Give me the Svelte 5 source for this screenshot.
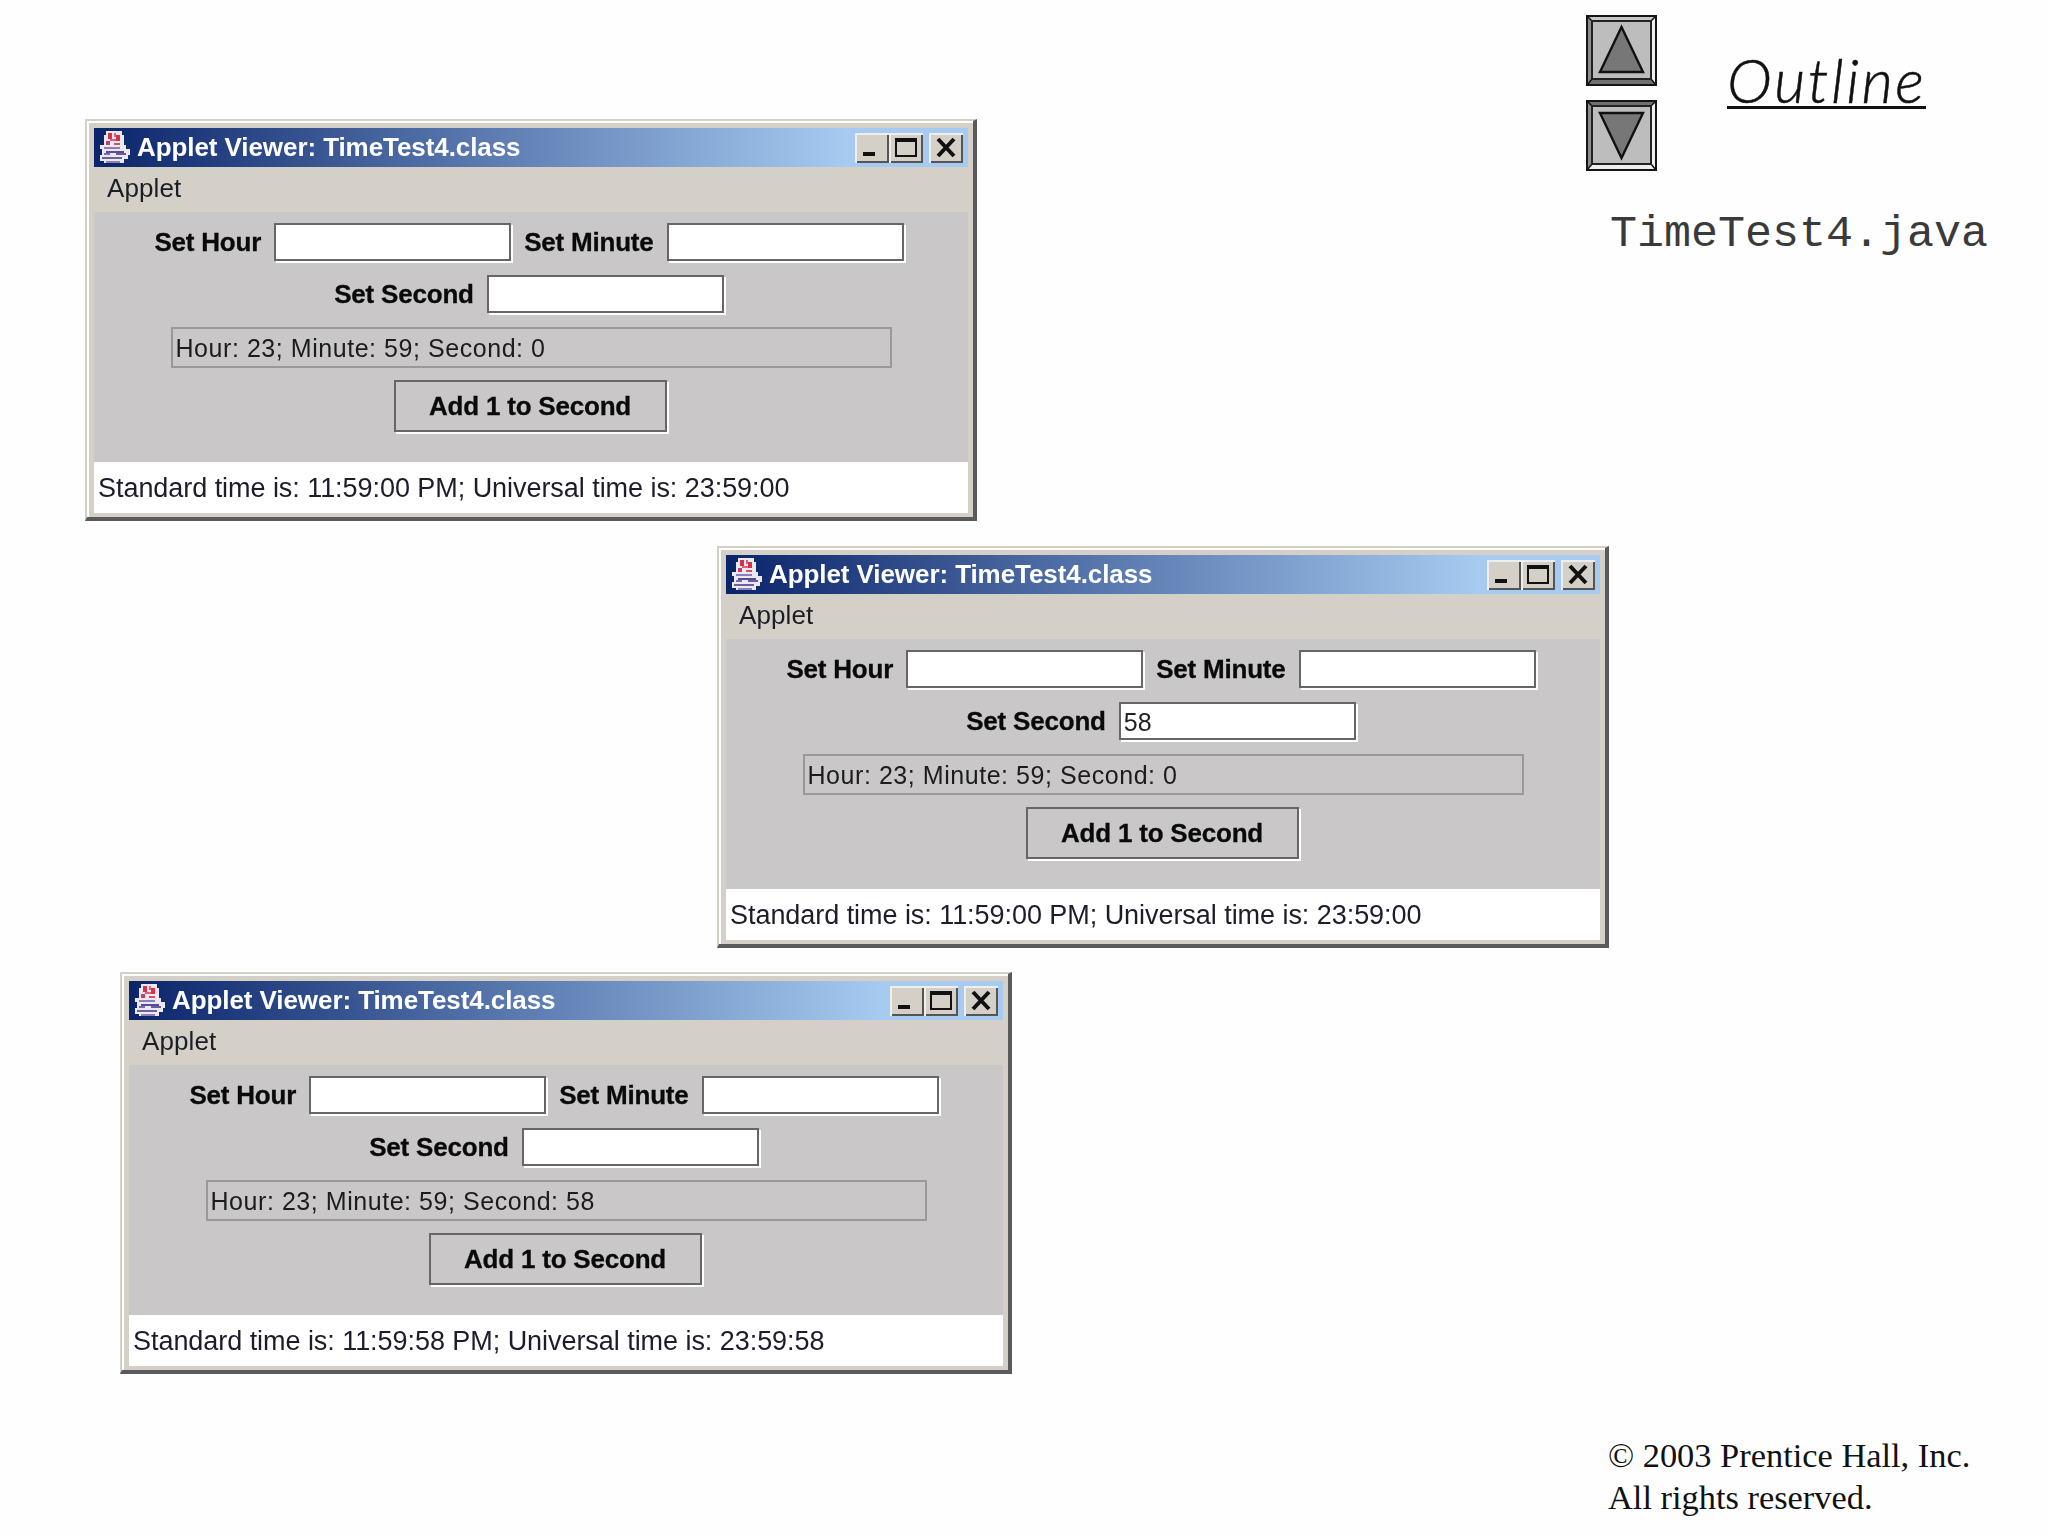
<script>
  const windows = [
    { x: 85, y: 119, second: '', hour: 'Hour: 23; Minute: 59; Second: 0', time: 'Standard time is: 11:59:00 PM; Universal time is: 23:59:00' },
    { x: 717, y: 546, second: '58', hour: 'Hour: 23; Minute: 59; Second: 0', time: 'Standard time is: 11:59:00 PM; Universal time is: 23:59:00' },
    { x: 120, y: 972, second: '', hour: 'Hour: 23; Minute: 59; Second: 58', time: 'Standard time is: 11:59:58 PM; Universal time is: 23:59:58' }
  ];
</script>

<div class="stage">
  <aside class="side">
    <div class="top">
      <div class="arrows">
        <svg width="71" height="71" viewBox="0 0 71 71">
          <rect x="1" y="1" width="69" height="69" fill="#bdbdbd"/>
          <path d="M1 1H70L65 6H6Z" fill="#c8c8c8"/>
          <path d="M1 1L6 6V64L1 70Z" fill="#8e8e8e"/>
          <path d="M70 1V70L65 64V6Z" fill="#f0f0f0"/>
          <path d="M1 70H70L65 64H6Z" fill="#707070"/>
          <path d="M1 1L6 6M70 1L65 6M1 70L6 64M70 70L65 64" stroke="#111" stroke-width="1.5"/>
          <rect x="1" y="1" width="69" height="69" fill="none" stroke="#151515" stroke-width="2"/>
          <rect x="6" y="6" width="59" height="58" fill="none" stroke="#222" stroke-width="2"/>
          <path d="M35.5 12L57 57H14Z" fill="#777" stroke="#111" stroke-width="2.4"/>
        </svg>
        <svg width="71" height="71" viewBox="0 0 71 71">
          <rect x="1" y="1" width="69" height="69" fill="#bdbdbd"/>
          <path d="M1 1H70L65 6H6Z" fill="#707070"/>
          <path d="M1 1L6 6V64L1 70Z" fill="#8e8e8e"/>
          <path d="M70 1V70L65 64V6Z" fill="#f0f0f0"/>
          <path d="M1 70H70L65 64H6Z" fill="#f0f0f0"/>
          <path d="M1 1L6 6M70 1L65 6M1 70L6 64M70 70L65 64" stroke="#111" stroke-width="1.5"/>
          <rect x="1" y="1" width="69" height="69" fill="none" stroke="#151515" stroke-width="2"/>
          <rect x="6" y="6" width="59" height="58" fill="none" stroke="#222" stroke-width="2"/>
          <path d="M14 13H57L35.5 58Z" fill="#777" stroke="#111" stroke-width="2.4"/>
        </svg>
      </div>
      <span class="outline">Outline</span>
    </div>
    <div class="file">TimeTest4.java</div>
    <div class="copy">© 2003 Prentice Hall, Inc.<br />All rights reserved.</div>
  </aside>

  {#each windows as w}
    <section class="win" style="left:{w.x}px;top:{w.y}px">
      <header class="title">
        <svg class="logo" width="34" height="34" viewBox="0 0 17 17" shape-rendering="crispEdges">
          <path d="M4 0H12V2H13V7H14V9H16V12H15V14H13V16H3V15H1V12H2V9H1V7H3V2H4Z" fill="#ece8f0"/>
          <rect x="5" y="1" width="2" height="3" fill="#d8324a"/>
          <rect x="8" y="1" width="1" height="2" fill="#e0607a"/>
          <rect x="9" y="2" width="2" height="3" fill="#d8324a"/>
          <rect x="6" y="4" width="3" height="1" fill="#e0607a"/>
          <rect x="4" y="5" width="2" height="2" fill="#c9405e"/>
          <rect x="8" y="6" width="3" height="1" fill="#d0506e"/>
          <rect x="3" y="8" width="8" height="1" fill="#8c7cc0"/>
          <rect x="4" y="10" width="9" height="1" fill="#5a4c94"/>
          <rect x="3" y="11" width="3" height="1" fill="#7a6cb0"/>
          <rect x="9" y="11" width="5" height="1" fill="#6a5aa4"/>
          <rect x="2" y="13" width="10" height="1" fill="#6c60a0"/>
          <rect x="4" y="15" width="7" height="1" fill="#8c80b8"/>
        </svg>
        <span class="title-text">Applet Viewer: TimeTest4.class</span>
        <div class="ctrls">
          <button class="ctrl" aria-label="Minimize"><svg width="34" height="30" viewBox="0 0 34 30"><rect x="8" y="19" width="12" height="4" fill="#111"/></svg></button>
          <button class="ctrl" aria-label="Maximize"><svg width="34" height="30" viewBox="0 0 34 30"><path d="M6 5H28V24H6Z M8 9V22H26V9Z" fill="#111" fill-rule="evenodd"/></svg></button>
          <button class="ctrl gap" aria-label="Close"><svg width="34" height="30" viewBox="0 0 34 30"><path d="M9 6L25 23M25 6L9 23" stroke="#111" stroke-width="4"/></svg></button>
        </div>
      </header>
      <div class="menu">Applet</div>
      <div class="content">
        <div class="row shifted">
          <span class="lbl">Set Hour</span><span class="field"></span>
          <span class="lbl next">Set Minute</span><span class="field"></span>
        </div>
        <div class="row shifted">
          <span class="lbl">Set Second</span><span class="field">{w.second}</span>
        </div>
        <div class="row"><div class="display">{w.hour}</div></div>
        <div class="row"><button class="add">Add 1 to Second</button></div>
      </div>
      <div class="status">{w.time}</div>
    </section>
  {/each}
</div>

<style>
  :global(body) { margin: 0; background: #fefefe; }
  .stage { position: relative; width: 2048px; height: 1536px; overflow: hidden; background: #fefefe; }

  .side { height: 100%; box-sizing: border-box; margin-left: 1586px; padding-top: 15px; display: flex; flex-direction: column; }
  .top { display: flex; align-items: flex-start; }
  .arrows { display: flex; flex-direction: column; gap: 14px; width: 72px; }
  .arrows svg { display: block; }
  .outline {
    margin: 35px 0 0 69px; font: italic 300 61px/60px Lato, sans-serif; color: #111; letter-spacing: 2.4px;
    -webkit-text-stroke: 0.5px #111;
    border-bottom: 3px solid #111; height: 56px;
  }
  .file { margin: 39px 0 0 24px; font: 45px/50px "Liberation Mono", monospace; color: #3a3a3a; }
  .copy { margin-top: auto; margin-left: 22px; padding-bottom: 18px; font: 34.4px/42px "Liberation Serif", serif; color: #111; }

  .win {
    position: absolute; box-sizing: border-box; width: 892px; height: 402px;
    display: flex; flex-direction: column; background: #d4d0c8;
    border-style: solid; border-width: 2px 4px 4px 2px;
    border-color: #d4d0c8 #5a5a5a #5a5a5a #d4d0c8;
    box-shadow: inset 2px 2px 0 #fff;
    padding: 7px 5px 4px 7px;
    font-family: "Liberation Sans", Arial, sans-serif;
    filter: blur(0.4px);
  }
  .title {
    height: 39px; display: flex; align-items: center; padding: 0 5px 0 4px; box-sizing: border-box;
    background: linear-gradient(90deg, #0a246a 0%, #a6caf0 86%);
  }
  .logo { flex: none; display: block; }
  .title-text { margin-left: 5px; color: #fff; font-weight: 700; font-size: 26px; white-space: nowrap; letter-spacing: -0.08px; }
  .ctrls { margin-left: auto; display: flex; }
  .ctrl {
    width: 34px; height: 30px; padding: 0; margin: 0; display: block; background: #d4d0c8;
    border: 0; box-shadow: inset 2px 2px 0 #eee, inset -2px -2px 0 #555;
  }
  .ctrl svg { display: block; }
  .gap { margin-left: 6px; }
  .menu { height: 45px; box-sizing: border-box; padding-left: 13px; line-height: 43px; font-size: 26px; letter-spacing: 0.1px; color: #1d1d26; }
  .content {
    height: 250px; box-sizing: border-box; padding-top: 11px; background: #c9c7c7;
    display: flex; flex-direction: column; gap: 12px;
  }
  .row { display: flex; justify-content: center; align-items: flex-start; }
  .shifted { padding-right: 2px; min-height: 40px; }
  .lbl { font-weight: 700; font-size: 26px; line-height: 38px; color: #0a0a0a; margin-right: 13px; white-space: nowrap; letter-spacing: -0.2px; -webkit-text-stroke: 0.3px #0a0a0a; }
  .next { margin-left: 11px; }
  .field {
    box-sizing: border-box; width: 237px; height: 38px; background: #fff; border: 2px solid #666;
    box-shadow: 2px 2px 0 #fff; margin-right: 2px;
    font-size: 25px; line-height: 36px; padding-left: 3px; color: #222;
  }
  .display {
    box-sizing: border-box; width: 721px; height: 41px; border: 2px solid #999;
    font-size: 25px; line-height: 38px; padding-left: 3px; color: #1c1c1c; letter-spacing: 0.55px; white-space: nowrap;
  }
  .add {
    box-sizing: border-box; width: 273px; height: 52px; margin: 0 2px 2px 0; padding: 0; background: #c9c7c7;
    border: 2px solid #666; box-shadow: 2px 2px 0 #fff; border-radius: 0;
    font: 700 26px "Liberation Sans", Arial, sans-serif; letter-spacing: -0.2px; -webkit-text-stroke: 0.3px #0a0a0a; color: #0a0a0a;
  }
  .status {
    height: 51px; box-sizing: border-box; background: #fff; padding-left: 4px; line-height: 52px;
    font-size: 27px; letter-spacing: -0.05px; color: #1c1c2a; white-space: nowrap;
  }
</style>
